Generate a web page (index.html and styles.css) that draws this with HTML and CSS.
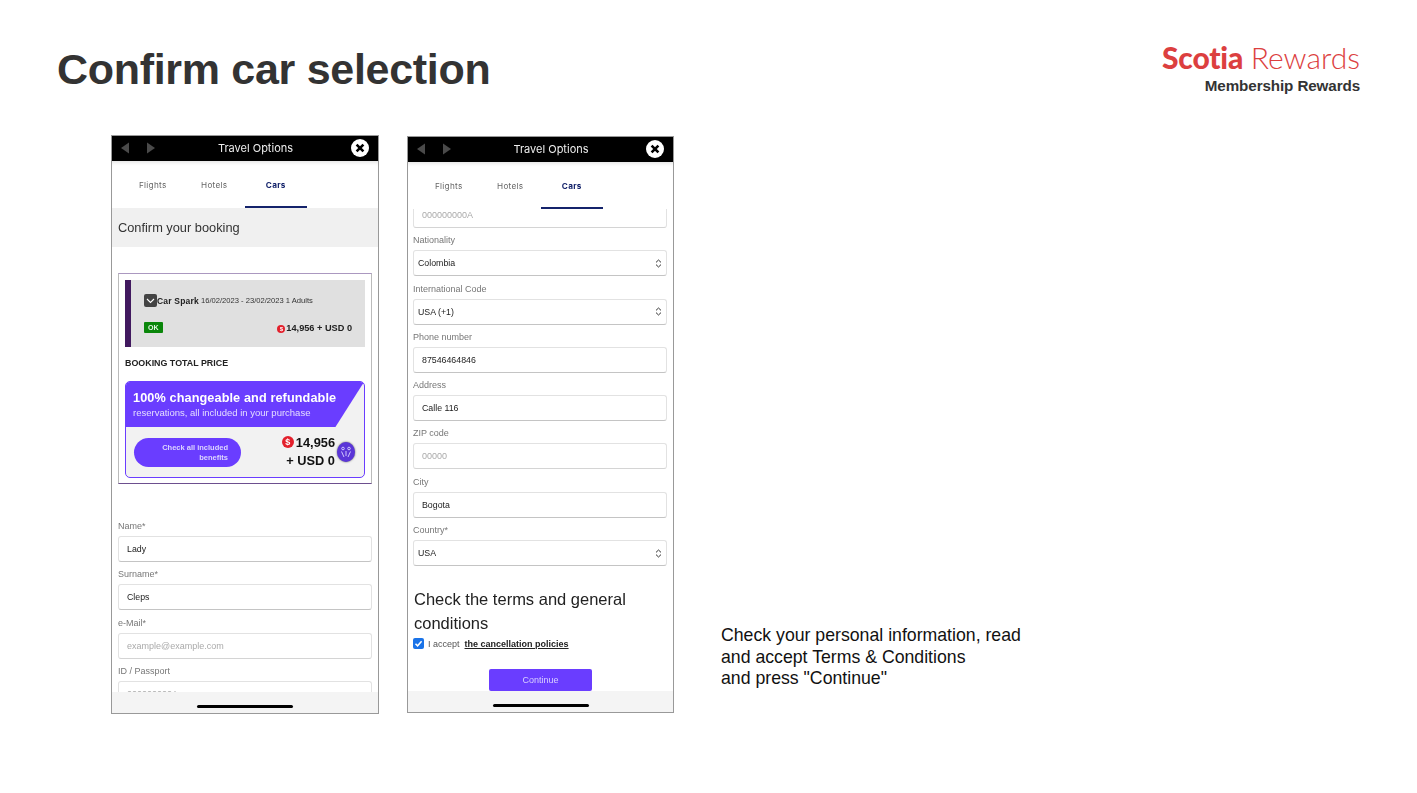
FILE: index.html
```html
<!DOCTYPE html>
<html lang="en">
<head>
    <meta charset="UTF-8">
    <meta name="viewport" content="width=device-width, initial-scale=1.0">
    <title>Confirm car selection</title>
    <link rel="stylesheet" href="styles.css">
</head>
<body>
    <header class="slide-head">
        <h1>Confirm car selection</h1>
        <div class="brand">
            <div class="brand-logo"><span class="brand-bold">Scotia</span> <span class="brand-light">Rewards</span></div>
            <div class="brand-sub">Membership Rewards</div>
        </div>
    </header>

    <main class="slide-body">
        <!-- first phone -->
        <section class="phone phone-one">
            <div class="topbar">
                <div class="arrows">
                    <svg width="10" height="12" viewBox="0 0 10 12"><path d="M9 0.5V11.5L1 6Z" fill="#4a4a4a"/></svg>
                    <svg width="10" height="12" viewBox="0 0 10 12"><path d="M1 0.5V11.5L9 6Z" fill="#4a4a4a"/></svg>
                </div>
                <div class="topbar-title">Travel Options</div>
                <svg class="close" width="18" height="18" viewBox="0 0 18 18"><circle cx="9" cy="9" r="9" fill="#fff"/><path d="M5.6 5.6L12.4 12.4M12.4 5.6L5.6 12.4" stroke="#000" stroke-width="2.6"/></svg>
            </div>
            <nav class="tabs">
                <span class="tab">Flights</span>
                <span class="tab">Hotels</span>
                <span class="tab tab-active">Cars</span>
            </nav>
            <div class="screen">
                <div class="confirm-title">Confirm your booking</div>
                <div class="booking">
                    <div class="car-row">
                        <div class="car-line">
                            <svg class="chevron" width="13" height="13" viewBox="0 0 13 13"><rect width="13" height="13" rx="2" fill="#444"/><path d="M3 5L6.5 8.5L10 5" stroke="#fff" stroke-width="1.1" fill="none"/></svg>
                            <b class="car-name">Car Spark</b>
                            <span class="car-dates">16/02/2023 - 23/02/2023 1 Adults</span>
                        </div>
                        <div class="car-status">
                            <span class="ok">OK</span>
                            <span class="car-price"><span class="coin coin-small">$</span>14,956 + USD 0</span>
                        </div>
                    </div>
                    <div class="total-label">BOOKING TOTAL PRICE</div>
                    <div class="promo">
                        <div class="promo-top">
                            <div class="promo-title">100% changeable and refundable</div>
                            <div class="promo-text">reservations, all included in your purchase</div>
                        </div>
                        <div class="promo-bottom">
                            <div class="promo-btn">Check all included benefits</div>
                            <div class="promo-price">
                                <div><span class="coin">$</span>14,956</div>
                                <div>+ USD 0</div>
                            </div>
                            <div class="promo-badge">
                                <svg width="12" height="12" viewBox="0 0 12 12" fill="none" stroke="#cfc6ff" stroke-width="1"><circle cx="3" cy="2.5" r="1.3"/><circle cx="9" cy="2.5" r="1.3"/><path d="M1.5 5.5L4 11M10.5 5.5L8 11M6 5V10"/></svg>
                            </div>
                        </div>
                    </div>
                </div>
                <div class="form form-one">
                    <label class="field-label">Name*</label>
                    <div class="field">Lady</div>
                    <label class="field-label">Surname*</label>
                    <div class="field">Cleps</div>
                    <label class="field-label">e-Mail*</label>
                    <div class="field field-empty">example@example.com</div>
                    <label class="field-label">ID / Passport</label>
                    <div class="field field-empty">000000000A</div>
                </div>
            </div>
            <div class="homebar"><span></span></div>
        </section>

        <!-- second phone -->
        <section class="phone phone-two">
            <div class="topbar">
                <div class="arrows">
                    <svg width="10" height="12" viewBox="0 0 10 12"><path d="M9 0.5V11.5L1 6Z" fill="#4a4a4a"/></svg>
                    <svg width="10" height="12" viewBox="0 0 10 12"><path d="M1 0.5V11.5L9 6Z" fill="#4a4a4a"/></svg>
                </div>
                <div class="topbar-title">Travel Options</div>
                <svg class="close" width="18" height="18" viewBox="0 0 18 18"><circle cx="9" cy="9" r="9" fill="#fff"/><path d="M5.6 5.6L12.4 12.4M12.4 5.6L5.6 12.4" stroke="#000" stroke-width="2.6"/></svg>
            </div>
            <nav class="tabs">
                <span class="tab">Flights</span>
                <span class="tab">Hotels</span>
                <span class="tab tab-active">Cars</span>
            </nav>
            <div class="screen">
                <div class="form form-two">
                    <div class="field field-empty field-cut">000000000A</div>
                    <label class="field-label">Nationality</label>
                    <div class="field field-select">Colombia <svg width="7" height="9" viewBox="0 0 7 9" fill="none" stroke="#333" stroke-width="1"><path d="M1 3.4L3.5 1L6 3.4M1 5.6L3.5 8L6 5.6"/></svg></div>
                    <label class="field-label">International Code</label>
                    <div class="field field-select">USA (+1) <svg width="7" height="9" viewBox="0 0 7 9" fill="none" stroke="#333" stroke-width="1"><path d="M1 3.4L3.5 1L6 3.4M1 5.6L3.5 8L6 5.6"/></svg></div>
                    <label class="field-label">Phone number</label>
                    <div class="field">87546464846</div>
                    <label class="field-label">Address</label>
                    <div class="field">Calle 116</div>
                    <label class="field-label">ZIP code</label>
                    <div class="field field-empty">00000</div>
                    <label class="field-label">City</label>
                    <div class="field">Bogota</div>
                    <label class="field-label">Country*</label>
                    <div class="field field-select">USA <svg width="7" height="9" viewBox="0 0 7 9" fill="none" stroke="#333" stroke-width="1"><path d="M1 3.4L3.5 1L6 3.4M1 5.6L3.5 8L6 5.6"/></svg></div>
                </div>
                <h2 class="terms-title">Check the terms and general conditions</h2>
                <div class="accept">
                    <svg width="11" height="11" viewBox="0 0 11 11"><rect width="11" height="11" rx="2" fill="#1a73e8"/><path d="M2.5 5.7L4.6 7.8L8.6 3.2" stroke="#fff" stroke-width="1.5" fill="none"/></svg>
                    <span class="accept-text">I accept</span>
                    <a class="accept-link">the cancellation policies</a>
                </div>
                <div class="continue-row"><div class="continue">Continue</div></div>
            </div>
            <div class="homebar"><span></span></div>
        </section>

        <p class="note">Check your personal information, read<br>and accept Terms &amp; Conditions<br>and press "Continue"</p>
    </main>
</body>
</html>
```

FILE: styles.css
```css
body {
    margin: 0;
    width: 1417px;
    height: 793px;
    overflow: hidden;
    background-color: #fff;
    font-family: "Liberation Sans", Arial, sans-serif;
    color: #222;
}

/* slide header */
.slide-head {
    display: flex;
    justify-content: space-between;
    align-items: flex-start;
    height: 135px;
    padding: 0 57px;
    box-sizing: border-box;
}
h1 {
    margin: 43px 0 0;
    font-size: 43px;
    line-height: 52px;
    letter-spacing: -0.3px;
    color: #333;
}
.brand {
    margin-top: 41px;
    text-align: right;
}
.brand-logo {
    font-family: Lato, sans-serif;
    font-size: 30px;
    line-height: 32px;
    color: #dc3f3f;
    white-space: nowrap;
}
.brand-bold {
    font-weight: 900;
    letter-spacing: -0.2px;
}
.brand-light {
    font-weight: 300;
}
.brand-sub {
    margin-top: 3px;
    font-size: 15.2px;
    font-weight: bold;
    line-height: 20px;
    letter-spacing: -0.1px;
    color: #333;
}

/* phones */
.slide-body {
    display: flex;
    align-items: flex-start;
    padding-left: 111px;
}
.phone {
    display: flex;
    flex-direction: column;
    box-sizing: border-box;
    width: 268px;
    height: 579px;
    border: 1px solid #999;
    background-color: #fff;
    filter: blur(0.3px);
}
.phone-two {
    margin-left: 28px;
    margin-top: 1px;
    width: 267px;
    height: 577px;
}
.topbar {
    display: flex;
    align-items: center;
    flex: none;
    height: 25px;
    padding: 0 9px 2px 8px;
    box-sizing: border-box;
    background-color: #000;
}
.arrows {
    display: flex;
    gap: 16px;
    width: 44px;
}
.topbar-title {
    flex: 1;
    padding-right: 4px;
    text-align: center;
    font-family: Inter, sans-serif;
    font-size: 11px;
    color: #eee;
}
.close {
    flex: none;
}
.tabs {
    display: flex;
    flex: none;
    height: 47px;
    padding-left: 10px;
    background-color: #fff;
    box-shadow: inset 0 4px 4px -3px #ddd;
}
.tab {
    width: 61.5px;
    padding-top: 19px;
    box-sizing: border-box;
    text-align: center;
    font-family: Inter, sans-serif;
    font-size: 8.2px;
    letter-spacing: 0.3px;
    color: #666;
}
.tab-active {
    border-bottom: 2px solid #14236b;
    font-weight: bold;
    color: #14236b;
}
.screen {
    flex: 1;
    min-height: 0;
    overflow: hidden;
}
.homebar {
    display: flex;
    justify-content: center;
    flex: none;
    height: 21px;
    padding-top: 13px;
    box-sizing: border-box;
    background-color: #f4f4f4;
}
.homebar span {
    width: 96px;
    height: 3px;
    border-radius: 2px;
    background-color: #000;
}

/* booking card */
.confirm-title {
    height: 39px;
    padding-left: 6px;
    background-color: #f0f0f0;
    font-size: 12.8px;
    line-height: 40px;
    color: #333;
}
.booking {
    margin: 26px 6px 0;
    height: 211px;
    padding: 6px 6px 0;
    box-sizing: border-box;
    border: 1px solid #6d4f8f;
    border-top-color: #ab98c0;
    border-left-color: #bbb;
    border-right-color: #bbb;
}
.car-row {
    height: 67px;
    padding: 14px 13px 0 13px;
    box-sizing: border-box;
    border-left: 6px solid #41195f;
    background-color: #e0e0e0;
}
.car-line {
    display: flex;
    align-items: center;
    gap: 0;
}
.car-name {
    font-size: 8.5px;
    letter-spacing: 0.2px;
}
.car-dates {
    margin-left: 2px;
    font-size: 7.6px;
    color: #333;
}
.car-status {
    display: flex;
    justify-content: space-between;
    align-items: center;
    margin-top: 15px;
}
.ok {
    padding: 1px 4px;
    border-radius: 1px;
    background-color: #0a860a;
    font-size: 7px;
    font-weight: bold;
    line-height: 9px;
    color: #e5f5e5;
}
.car-price {
    font-size: 9.2px;
    font-weight: bold;
}
.coin {
    display: inline-block;
    width: 12px;
    height: 12px;
    margin-right: 2px;
    border-radius: 50%;
    background-color: #e3202c;
    font-size: 9px;
    font-weight: bold;
    line-height: 12px;
    text-align: center;
    vertical-align: 2px;
    color: #fff;
}
.coin-small {
    width: 8px;
    height: 8px;
    margin-right: 1px;
    font-size: 6px;
    line-height: 8px;
    vertical-align: 0;
}
.total-label {
    margin-top: 10px;
    font-size: 8.9px;
    font-weight: bold;
    line-height: 12px;
}
.promo {
    margin-top: 12px;
    height: 97px;
    overflow: hidden;
    box-sizing: border-box;
    border: 1px solid #6a3dff;
    border-radius: 5px;
    background-color: #f2f2f2;
}
.promo-top {
    height: 45px;
    padding: 8px 0 0 7px;
    box-sizing: border-box;
    background-color: #6a3dff;
    clip-path: polygon(0 0, 100% 0, 88% 100%, 0 100%);
    color: #fff;
}
.promo-title {
    font-size: 12.7px;
    font-weight: bold;
    line-height: 16px;
    letter-spacing: 0.1px;
}
.promo-text {
    font-size: 9.5px;
    line-height: 13px;
    color: #e4ddff;
}
.promo-bottom {
    display: flex;
    align-items: center;
    height: 50px;
    padding-left: 8px;
    box-sizing: border-box;
}
.promo-btn {
    flex: none;
    width: 107px;
    height: 29px;
    padding: 5px 13px 0 20px;
    box-sizing: border-box;
    border-radius: 15px;
    background-color: #6a3dff;
    font-size: 7.5px;
    font-weight: bold;
    line-height: 10px;
    text-align: right;
    color: #ddd6ff;
}
.promo-price {
    flex: 1;
    font-size: 12.8px;
    font-weight: bold;
    line-height: 18px;
    text-align: right;
    color: #111;
}
.promo-badge {
    display: flex;
    justify-content: center;
    align-items: center;
    flex: none;
    width: 18px;
    height: 20px;
    margin: 0 9px 0 2px;
    border-radius: 50%;
    background-color: #5a35d8;
    box-shadow: 0 0 2px #555;
}

/* forms */
.form {
    padding: 0 6px;
}
.form-one {
    padding-top: 36px;
}
.field-label {
    display: block;
    height: 16px;
    font-size: 9px;
    line-height: 13px;
    color: #777;
}
.field {
    display: flex;
    align-items: center;
    justify-content: space-between;
    height: 26px;
    margin-bottom: 6.3px;
    padding: 0 4px 0 8px;
    box-sizing: border-box;
    border: 1px solid #e2e2e2;
    border-bottom-color: #c4c4c4;
    border-radius: 3px;
    background-color: #fff;
    font-size: 8.8px;
    color: #222;
}
.field-empty {
    border-bottom-color: #d4d4d4;
    font-size: 9px;
    color: #aaa;
}
.field-cut {
    margin-top: -7px;
}
.field-select {
    padding-left: 4px;
}
.form-two {
    padding: 0 6px 0 5px;
}

/* terms */
.terms-title {
    margin: 21px 6px 0;
    font-size: 16.5px;
    font-weight: normal;
    line-height: 24px;
    color: #222;
}
.accept {
    display: flex;
    align-items: center;
    margin: 3px 5px 0;
    font-size: 9px;
}
.accept-text {
    margin-left: 4px;
    color: #555;
}
.accept-link {
    margin-left: 5px;
    font-weight: bold;
    text-decoration: underline;
}
.continue-row {
    display: flex;
    justify-content: center;
    margin-top: 20px;
}
.continue {
    width: 103px;
    height: 22px;
    border-radius: 2px;
    background-color: #6a3dff;
    font-size: 9px;
    line-height: 22px;
    text-align: center;
    color: #d8d0ff;
}

.note {
    margin: 490px 0 0 47px;
    font-size: 17.7px;
    line-height: 21.5px;
    color: #111;
    white-space: nowrap;
}
```
